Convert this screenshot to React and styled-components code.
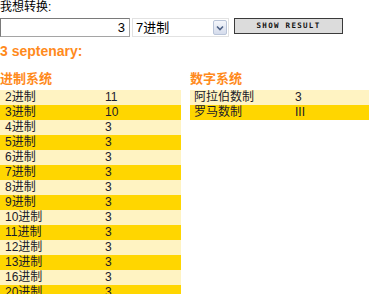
import React from 'react';
import styled, { createGlobalStyle } from 'styled-components';

const GlobalStyle = createGlobalStyle`
    body {
        margin: 0;
        background: #fff;
        font-family: 'Liberation Sans', 'Noto Sans CJK SC', sans-serif;
        font-size: 12px;
        color: #000;
    }
`;

const Page = styled.div`
    width: 371px;
    height: 294px;
    overflow: hidden;
`;

const Label = styled.div`
    line-height: 14px;
    height: 14px;
`;

const Form = styled.div`
    display: flex;
    align-items: flex-start;
    margin-top: 4px;
    height: 19px;
`;

const NumberInput = styled.input`
    box-sizing: border-box;
    width: 130px;
    height: 19px;
    margin: 0;
    padding: 0 4px;
    border: 1px solid #a5a5a5;
    border-top-color: #7a7a7a;
    border-left-color: #7a7a7a;
    text-align: right;
    font-family: 'Liberation Sans', sans-serif;
    font-size: 13px;
    color: #000;
    outline: none;
`;

const SelectBox = styled.div`
    box-sizing: border-box;
    display: flex;
    align-items: center;
    width: 97px;
    height: 19px;
    margin-left: 2px;
    border: 1px solid #e2e2e2;
    background: #fff;
`;

const SelectText = styled.span`
    flex: 1;
    padding-left: 3px;
    font-size: 13px;
    line-height: 17px;
`;

const ArrowBox = styled.span`
    box-sizing: border-box;
    display: flex;
    align-items: center;
    justify-content: center;
    width: 14px;
    height: 15px;
    margin-right: 1px;
    border: 1px solid #b9c4d8;
    border-radius: 2px;
    background: linear-gradient(#f4f6fb, #d5dcec);
`;

const Button = styled.button`
    box-sizing: border-box;
    width: 109px;
    height: 16px;
    margin: 0 0 0 5px;
    padding: 0;
    border: 1px solid #3a3a3a;
    background: #dcdcdc;
    font-family: 'DejaVu Sans Mono', monospace;
    font-weight: bold;
    font-size: 7.5px;
    letter-spacing: 1.3px;
    color: #111;
    line-height: 14px;
`;

const Title = styled.div`
    margin-top: 5px;
    color: #ff8a1c;
    font-weight: bold;
    font-size: 14px;
    line-height: 18px;
`;

const Columns = styled.div`
    display: flex;
    gap: 9px;
    margin-top: 11px;
`;

const Section = styled.div`
    width: ${p => p.$width}px;
`;

const Heading = styled.div`
    color: #ff8a1c;
    font-weight: bold;
    font-size: 13px;
    line-height: 16px;
    margin-bottom: 3px;
`;

const Row = styled.div`
    display: grid;
    grid-template-columns: ${p => p.$first}px 1fr;
    height: 15px;
    line-height: 15px;
    background: ${p => (p.$dark ? '#ffd600' : '#fff3c2')};
    color: #1a1a2a;
`;

const Cell = styled.span`
    padding-left: ${p => p.$pad}px;
    white-space: nowrap;
`;

const bases = [
    ['2进制', '11'], ['3进制', '10'], ['4进制', '3'], ['5进制', '3'],
    ['6进制', '3'], ['7进制', '3'], ['8进制', '3'], ['9进制', '3'],
    ['10进制', '3'], ['11进制', '3'], ['12进制', '3'], ['13进制', '3'],
    ['16进制', '3'], ['20进制', '3'],
];

const numerals = [['阿拉伯数制', '3'], ['罗马数制', 'III']];

const Arrow = () => (
    <svg width="8" height="6" viewBox="0 0 8 6">
        <path d="M1 1.5 L4 4.5 L7 1.5" fill="none" stroke="#4d6185" strokeWidth="1.6" />
    </svg>
);

const App = () => (
    <Page>
        <GlobalStyle />
        <Label>我想转换:</Label>
        <Form>
            <NumberInput defaultValue="3" />
            <SelectBox>
                <SelectText>7进制</SelectText>
                <ArrowBox><Arrow /></ArrowBox>
            </SelectBox>
            <Button>SHOW RESULT</Button>
        </Form>
        <Title>3 septenary:</Title>
        <Columns>
            <Section $width={181}>
                <Heading>进制系统</Heading>
                {bases.map(([name, value], i) => (
                    <Row key={name} $dark={i % 2 === 1} $first={105}>
                        <Cell $pad={5}>{name}</Cell>
                        <Cell $pad={0}>{value}</Cell>
                    </Row>
                ))}
            </Section>
            <Section $width={179}>
                <Heading>数字系统</Heading>
                {numerals.map(([name, value], i) => (
                    <Row key={name} $dark={i % 2 === 1} $first={105}>
                        <Cell $pad={4}>{name}</Cell>
                        <Cell $pad={0}>{value}</Cell>
                    </Row>
                ))}
            </Section>
        </Columns>
    </Page>
);

export default App;
